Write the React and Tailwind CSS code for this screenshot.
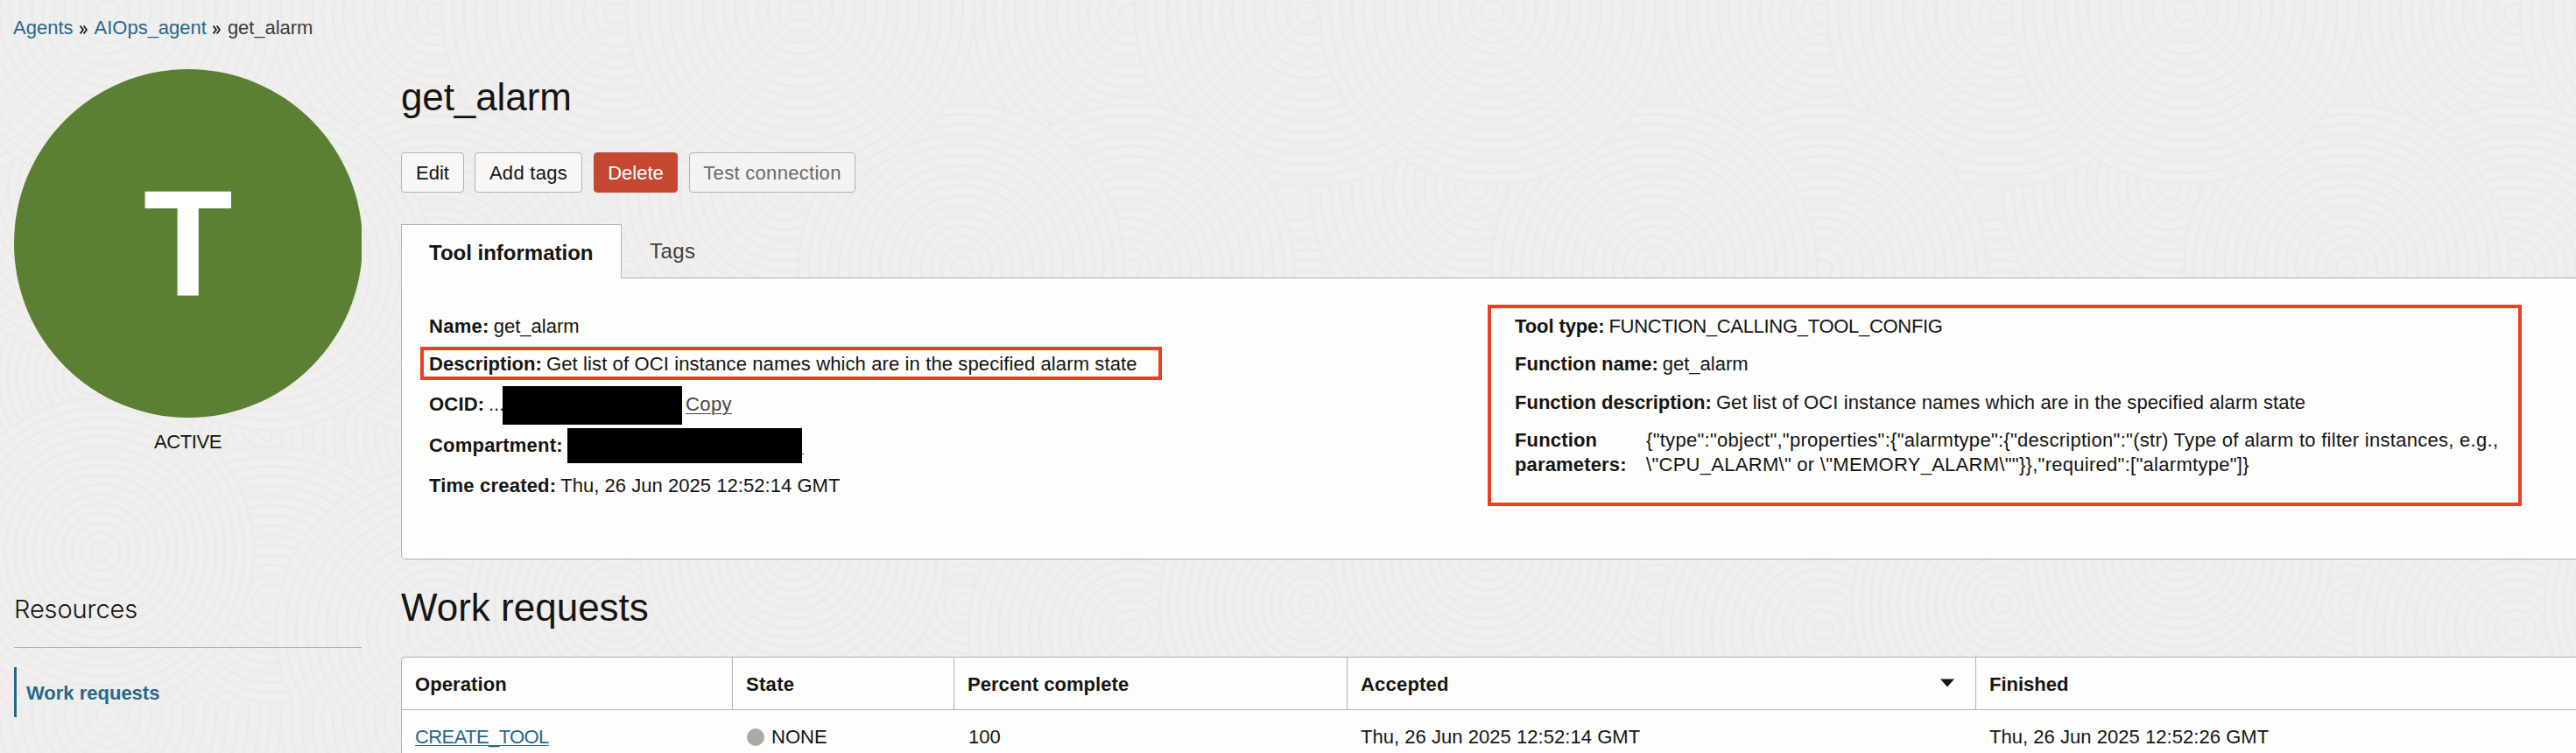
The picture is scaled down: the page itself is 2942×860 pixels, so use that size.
const discs = [
  [310, 480, 190], [500, 500, 190], [703, 440, 190], [104, 430, 170],
  [499, 16, 190], [104, 215, 190], [703, 15, 198], [499, 308, 188],
  [307, 305, 186], [123, 12, 198],
  [310, 690, 180], [500, 720, 185], [703, 690, 170], [115, 630, 175],
];
const rings = [16, 15, 14, 13, 12, 11, 10, 9, 8, 7, 6, 5, 4, 3, 2, 1];

function Texture() {
  return (
    <svg className="absolute inset-0 h-full w-full" aria-hidden="true">
      <defs>
        <pattern id="swirl" width="791" height="805" patternUnits="userSpaceOnUse">
          <rect width="791" height="805" fill="#efeeec" />
          {discs.map(([x, y, r], i) =>
            [-791, 0, 791].map((dx) => (
              <g key={`${i}:${dx}`} fill="#f0efed" stroke="#ecebe9" strokeWidth="3">
                {rings.map((k) => (
                  <circle key={k} cx={x + dx} cy={y} r={(r * k) / 16} />
                ))}
              </g>
            ))
          )}
        </pattern>
      </defs>
      <rect width="100%" height="100%" fill="url(#swirl)" />
    </svg>
  );
}

function Field({ label, labelClass = "", children, className = "" }) {
  return (
    <div className={`flex items-center gap-[5px] whitespace-nowrap leading-[26px] ${className}`}>
      <span className={`font-bold ${labelClass}`}>{label}</span>
      {children}
    </div>
  );
}

function Crumb() {
  return (
    <svg className="mx-[7px] mt-[3px] h-[10px] w-[9px]" viewBox="0 0 9 10" fill="none" stroke="#161513" strokeWidth="1.7">
      <path d="M.6.6 4 5 .6 9.4M4.6.6 8 5l-3.4 4.4" />
    </svg>
  );
}

function Sidebar() {
  return (
    <aside className="w-[397px] shrink-0">
      <div className="h-[398px] overflow-hidden">
        <div className="flex h-[398px] w-[398px] items-center justify-center rounded-full bg-[#5b8034]">
          <span className="scale-x-[0.965] text-[173px] leading-none font-bold text-white">T</span>
        </div>
      </div>
      <div className="mt-[16px] text-center leading-6 tracking-[-0.4px]">ACTIVE</div>
      <h2 className="mt-[161px] font-['Inter'] text-[29px] leading-9 font-light tracking-[-0.1px]">Resources</h2>
      <div className="mt-[25px] border-t border-[#b3b1ae]" />
      <div className="mt-[22px] flex h-[57px] items-center border-l-[3px] border-[#27678c] pl-[11px] leading-6 font-bold text-[#27678c]">
        <span className="pt-[2px]">Work requests</span>
      </div>
    </aside>
  );
}

function Buttons() {
  const base = "h-[46px] rounded-[4px] border leading-6 pt-px";
  return (
    <div className="flex">
      <button className={`${base} mr-3 w-[72px] border-[#b5b3b0] bg-[#f8f7f6]`}>Edit</button>
      <button className={`${base} mr-[13px] w-[123px] border-[#b5b3b0] bg-[#f8f7f6] tracking-[0.3px]`}>Add tags</button>
      <button className={`${base} mr-[13px] w-[96px] border-[#c44730] bg-[#c44730] text-white`}>Delete</button>
      <button className={`${base} w-[190px] border-[#b5b3b0] bg-[#f4f3f1] tracking-[0.3px] text-[#6f6964]`}>Test connection</button>
    </div>
  );
}

function Details() {
  return (
    <section className="mt-9">
      <div className="relative z-10 flex h-[62px]">
        <div className="flex w-[252px] border border-b-0 border-[#b3b1ae] bg-[#fdfdfc] pt-[18px] pl-[31px] text-[24px] leading-7 font-bold">Tool information</div>
        <div className="pt-[17px] pl-[32px] text-[24px] leading-7 tracking-[0.4px] text-[#403c38]">Tags</div>
      </div>
      <div className="-mt-px flex h-[322px] rounded-bl-[5px] border border-r-0 border-[#b3b1ae] bg-[#fdfdfc]">
        <div className="w-[1240px] pt-[42px]">
          <Field label="Name:" labelClass="tracking-[0.3px]" className="pl-[31px]">get_alarm</Field>
          <div className="mt-[10px] ml-[21px] flex h-[38px] w-[847px] items-center border-4 border-[#eb3e25] pt-[2px] pl-[6px]">
            <Field label="Description:" labelClass="tracking-[0.05px]">
              <span className="tracking-[0.12px]">Get list of OCI instance names which are in the specified alarm state</span>
            </Field>
          </div>
          <div className="mt-[7px] flex h-[44px] whitespace-nowrap pl-[31px] leading-[42px]">
            <span className="w-[68px] font-bold tracking-[0.2px]">OCID:</span>
            <span className="w-[16px]">...</span>
            <span className="h-[44px] w-[205px] bg-black" />
            <span className="ml-[4px] tracking-[0.4px] text-[#4a4642] underline decoration-1 underline-offset-[3px]">Copy</span>
          </div>
          <div className="mt-1 flex h-10 whitespace-nowrap pl-[31px] leading-10">
            <span className="w-[158px] font-bold tracking-[0.2px]">Compartment:</span>
            <span className="h-10 w-[268px] bg-black" />
            <span className="mt-[29px] h-px w-[2px] bg-[#4a4642]" />
          </div>
          <Field label="Time created:" labelClass="tracking-[0.2px]" className="mt-[13px] pl-[31px]"><span className="tracking-[0.04px]">Thu, 26 Jun 2025 12:52:14 GMT</span></Field>
        </div>
        <div className="mt-[30px] h-[230px] w-[1181px] border-4 border-[#eb3e25] pt-2 pl-[27px]">
          <Field label="Tool type:" labelClass="tracking-[-0.1px]"><span className="tracking-[-0.3px]">FUNCTION_CALLING_TOOL_CONFIG</span></Field>
          <Field label="Function name:" className="mt-[17px]">get_alarm</Field>
          <Field label="Function description:" className="mt-[18px]"><span className="tracking-[0.1px]">Get list of OCI instance names which are in the specified alarm state</span></Field>
          <div className="mt-[16px] flex leading-7">
            <div className="w-[150px] font-bold tracking-[0.15px]">Function parameters:</div>
            <div className="w-[990px] tracking-[0.28px]">{'{"type":"object","properties":{"alarmtype":{"description":"(str) Type of alarm to filter instances, e.g., \\"CPU_ALARM\\" or \\"MEMORY_ALARM\\""}},"required":["alarmtype"]}'}</div>
          </div>
        </div>
      </div>
    </section>
  );
}

function Requests() {
  const th = "flex items-center border-r border-[#b3b1ae] pl-[15px] pt-[2px] font-bold";
  const td = "pl-4";
  return (
    <section>
      <h2 className="mt-[29px] text-[44px] leading-[52px]">Work requests</h2>
      <div className="mt-[30px] h-[140px] rounded-tl-[5px] border border-r-0 border-[#b3b1ae] bg-[#fdfdfc]">
        <div className="grid h-[60px] grid-cols-[378px_253px_449px_718px_1fr] border-b border-[#b3b1ae]">
          <div className={`${th} tracking-[0.1px]`}>Operation</div>
          <div className={`${th} tracking-[0.3px]`}>State</div>
          <div className={`${th} tracking-[0.05px]`}>Percent complete</div>
          <div className={`${th} justify-between pr-[24px] tracking-[0.2px]`}>
            Accepted
            <svg className="mb-1 h-[10px] w-4" viewBox="0 0 16 10"><path d="M0 .5h16L8 9.5Z" fill="#161513" /></svg>
          </div>
          <div className="flex items-center pt-[2px] pl-[15px] font-bold">Finished</div>
        </div>
        <div className="grid grid-cols-[378px_253px_449px_718px_1fr] pt-[18px] leading-[26px]">
          <div className="pl-[15px] tracking-[-0.6px] text-[#27678c] underline decoration-1 underline-offset-2">CREATE_TOOL</div>
          <div className={`${td} flex items-center gap-2`}><span className="h-5 w-5 rounded-full bg-[#aea8a2]" />NONE</div>
          <div className={td}>100</div>
          <div className="pl-[15px] tracking-[0.04px]">Thu, 26 Jun 2025 12:52:14 GMT</div>
          <div className="pl-[15px] tracking-[0.04px]">Thu, 26 Jun 2025 12:52:26 GMT</div>
        </div>
      </div>
    </section>
  );
}

export default function App() {
  return (
    <div className="relative isolate h-[860px] overflow-hidden bg-[#efeeec] font-['Liberation_Sans',Arial,sans-serif] text-[22px] text-[#161513]">
      <Texture />
      <div className="relative pl-4">
        <nav className="flex h-[79px] items-start pt-[20px] leading-6">
          <a className="-ml-px text-[#27678c]">Agents</a>
          <span className="flex h-6 items-center"><Crumb /></span>
          <a className="ml-px text-[#27678c]">AIOps_agent</a>
          <span className="flex h-6 items-center"><Crumb /></span>
          <span className="ml-px tracking-[-0.05px] text-[#403c38]">get_alarm</span>
        </nav>
        <div className="flex">
          <Sidebar />
          <main className="ml-[45px] min-w-0 flex-1">
            <h1 className="mt-[4px] mb-[35px] text-[44px] leading-[56px] tracking-[-0.1px]">get_alarm</h1>
            <Buttons />
            <Details />
            <Requests />
          </main>
        </div>
      </div>
    </div>
  );
}
